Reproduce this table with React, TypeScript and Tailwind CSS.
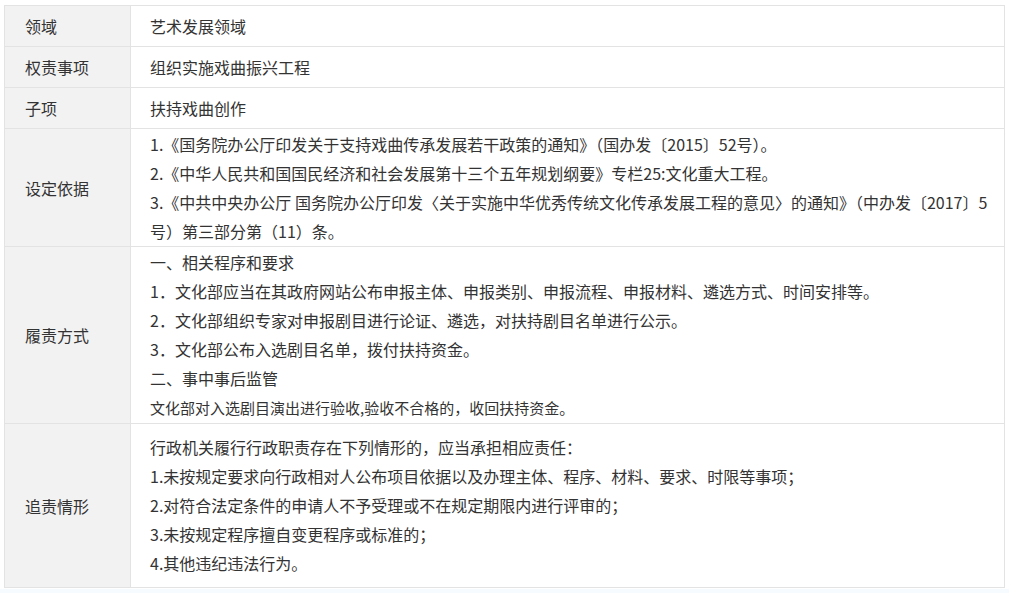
import React from 'react';

interface Row {
  label: string;
  lines: React.ReactNode[];
  height: string;
}

// heights include the 1px top border of every row after the first
const rows: Row[] = [
  { label: '领域', lines: ['艺术发展领域'], height: 'h-[40px]' },
  { label: '权责事项', lines: ['组织实施戏曲振兴工程'], height: 'h-[41px]' },
  { label: '子项', lines: ['扶持戏曲创作'], height: 'h-[41px]' },
  {
    label: '设定依据',
    height: 'h-[118px]',
    lines: [
      '1.《国务院办公厅印发关于支持戏曲传承发展若干政策的通知》（国办发〔2015〕52号）。',
      '2.《中华人民共和国国民经济和社会发展第十三个五年规划纲要》专栏25:文化重大工程。',
      '3.《中共中央办公厅 国务院办公厅印发〈关于实施中华优秀传统文化传承发展工程的意见〉的通知》（中办发〔2017〕5',
      '号）第三部分第（11）条。',
    ],
  },
  {
    label: '履责方式',
    height: 'h-[177px]',
    lines: [
      '一、相关程序和要求',
      '1．文化部应当在其政府网站公布申报主体、申报类别、申报流程、申报材料、遴选方式、时间安排等。',
      '2．文化部组织专家对申报剧目进行论证、遴选，对扶持剧目名单进行公示。',
      '3．文化部公布入选剧目名单，拨付扶持资金。',
      '二、事中事后监管',
      <span className="text-[15px]">文化部对入选剧目演出进行验收,验收不合格的，收回扶持资金。</span>,
    ],
  },
  {
    label: '追责情形',
    height: 'h-[164px]',
    lines: [
      '行政机关履行行政职责存在下列情形的，应当承担相应责任：',
      '1.未按规定要求向行政相对人公布项目依据以及办理主体、程序、材料、要求、时限等事项；',
      '2.对符合法定条件的申请人不予受理或不在规定期限内进行评审的；',
      '3.未按规定程序擅自变更程序或标准的；',
      '4.其他违纪违法行为。',
    ],
  },
];

const App = () => {
  return (
    <div
      className="min-h-screen bg-[#f5fbff] text-[#333] text-[16px]"
      style={{ fontFamily: '"Noto Sans CJK SC", "Noto Sans", sans-serif' }}
    >
      <div className="bg-white pt-[5px] pb-[1px] px-[4px]">
        <div className="border border-[#e3e3e3]">
          {rows.map((row, i) => (
            <div
              key={row.label}
              className={`flex ${row.height} ${i > 0 ? 'border-t border-[#e3e3e3]' : ''}`}
            >
              <div className="w-[126px] shrink-0 bg-[#f2f2f2] border-r border-[#e3e3e3] flex items-center pl-[20px]">
                {row.label}
              </div>
              <div className="flex-1 flex flex-col justify-center pl-[19px]">
                {row.lines.map((line, j) => (
                  <div key={j} className="leading-[29px] whitespace-nowrap">
                    {line}
                  </div>
                ))}
              </div>
            </div>
          ))}
        </div>
      </div>
    </div>
  );
};

export default App;
